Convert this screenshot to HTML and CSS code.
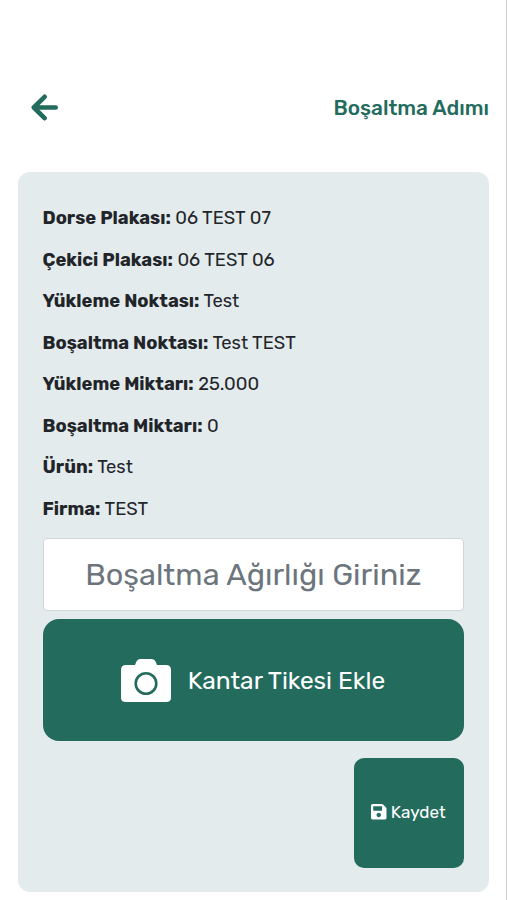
FILE: index.html
```html
<!DOCTYPE html>
<html lang="tr">
<head>
<meta charset="utf-8">
<title>Boşaltma Adımı</title>
<link rel="stylesheet" href="styles.css">
</head>
<body>
<main class="screen">
  <header class="header">
    <svg class="back" viewBox="0 0 27 27"><path fill="none" stroke="currentColor" stroke-width="4.600" stroke-linecap="round" stroke-linejoin="round" d="M13.600 2.800 2.800 13.500l10.800 10.700M4 13.500h20.700"/></svg>
    <h1 class="title">Boşaltma Adımı</h1>
  </header>
  <section class="card">
    <p class="row"><b>Dorse Plakası:</b> <span>06 TEST 07</span></p>
    <p class="row"><b>Çekici Plakası:</b> <span>06 TEST 06</span></p>
    <p class="row"><b>Yükleme Noktası:</b> <span>Test</span></p>
    <p class="row"><b>Boşaltma Noktası:</b> <span>Test TEST</span></p>
    <p class="row"><b>Yükleme Miktarı:</b> <span>25.000</span></p>
    <p class="row"><b>Boşaltma Miktarı:</b> <span>0</span></p>
    <p class="row"><b>Ürün:</b> <span>Test</span></p>
    <p class="row"><b>Firma:</b> <span>TEST</span></p>
    <input class="weight" type="text" placeholder="Boşaltma Ağırlığı Giriniz">
    <button class="add"><svg class="camera" viewBox="0 0 50 44"><path fill="currentColor" d="M5 6h9l1.200-3Q16.500 0 19.500 0h11Q33.500 0 34.800 3L36 6h9q5 0 5 5v28q0 4-5 4H5q-5 0-5-4V11q0-5 5-5z"/><circle class="lens" cx="25" cy="24.500" r="10.300"/></svg><span>Kantar Tikesi Ekle</span></button>
    <button class="save"><svg class="disk" viewBox="0 0 448 448"><path fill="currentColor" d="M433.900 97.900l-83.900-83.900A48 48 0 0 0 316.100 0H48C21.500 0 0 21.500 0 48v352c0 26.500 21.500 48 48 48h352c26.500 0 48-21.500 48-48V131.900a48 48 0 0 0-14.100-34zM224 384c-35.300 0-64-28.700-64-64s28.700-64 64-64 64 28.700 64 64-28.700 64-64 64zm96-304.500V180c0 6.600-5.400 12-12 12H76c-6.600 0-12-5.400-12-12V76c0-6.600 5.400-12 12-12h228.500c3.200 0 6.200 1.300 8.500 3.500l3.500 3.500a12 12 0 0 1 3.500 8.500z"/></svg><span>Kaydet</span></button>
  </section>
</main>
</body>
</html>
```
FILE: styles.css
```css
* { box-sizing: border-box; }
body { margin: 0; background: #fff; color: #212529; font-family: Rubik, Roboto, sans-serif; }
.screen { height: 900px; padding: 80px 17px 0 17.500px; border-right: 1px solid #cfcfcf; }
.header { display: flex; align-items: center; justify-content: space-between; height: 55px; margin-bottom: 37px; padding-left: 13.500px; color: #236b5d; }
.back { width: 27px; height: 27px; }
.title { margin: 0; font-size: 20.800px; font-weight: 500; }
.card { display: flex; flex-direction: column; height: 720px; padding: 33px 25px 20px; border-radius: 12px; background: #e4ebed; }
.row { flex: none; height: 27px; margin: 0 0 14.550px; font-size: 18.370px; line-height: 26px; white-space: nowrap; }
.weight { height: 73px; margin-top: .4px; border: 1px solid #ced4da; border-radius: 4px; text-align: center; font: 30.700px Rubik, Roboto, sans-serif; }
.weight::placeholder { color: #6c757d; opacity: 1; }
.add, .save { display: flex; align-items: center; justify-content: center; border: 0; color: #fff; background: #236b5d; font-family: inherit; }
.add { height: 122px; margin-top: 8.300px; border-radius: 16px; gap: 16.500px; font-size: 24.500px; padding-top: 2px; }
.camera { width: 50px; height: 44px; }
.lens { fill: none; stroke: #236b5d; stroke-width: 2.600; }
.save { align-self: flex-end; width: 110px; height: 110px; margin-top: 17px; border-radius: 10px; gap: 4px; font-size: 17.100px; padding: 0 1px 2px 0; }
.disk { width: 15.500px; height: 15.500px; }
```
